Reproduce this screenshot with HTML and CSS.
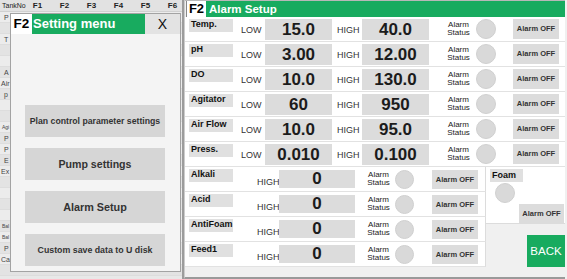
FILE: index.html
```html
<!DOCTYPE html>
<html>
<head>
<meta charset="utf-8">
<link rel="stylesheet" href="styles.css">
</head>
<body>
<div class="screen">
  <div class="left">
    <div class="thead">
      <span class="tk">TankNo</span><span>F1</span><span>F2</span><span>F3</span><span>F4</span><span>F5</span><span>F6</span>
    </div>
    <div class="trows">
      <div class="tr"><span class="c">P</span></div>
      <div class="tr alt"><span></span></div>
      <div class="tr"><span class="c">T</span></div>
      <div class="tr alt"><span></span></div>
      <div class="tr"><span></span></div>
      <div class="tr alt"><span class="c">A</span></div>
      <div class="tr"><span>Air</span></div>
      <div class="tr alt"><span class="c">p</span></div>
      <div class="tr"><span></span></div>
      <div class="tr alt"><span></span></div>
      <div class="tr"><span class="tiny">Agi</span></div>
      <div class="tr alt"><span class="c">P</span></div>
      <div class="tr"><span class="c">P</span></div>
      <div class="tr alt"><span class="c">E</span></div>
      <div class="tr"><span>Ex</span></div>
      <div class="tr alt"><span></span></div>
      <div class="tr"><span></span></div>
      <div class="tr alt"><span></span></div>
      <div class="tr"><span></span></div>
      <div class="tr alt"><span class="tiny">Bal</span></div>
      <div class="tr"><span class="tiny">Bal</span></div>
      <div class="tr alt"><span class="c">P</span></div>
      <div class="tr"><span>Ca</span></div>
      <div class="tr alt"><span></span></div>
    </div>
    <div class="dialog">
      <div class="dlg-head">
        <span class="fbox">F2</span>
        <span class="dlg-title">Setting menu</span>
        <span class="dlg-close">X</span>
      </div>
      <div class="dlg-body">
        <div class="menu-btn mb-plan">Plan control parameter settings</div>
        <div class="menu-btn mb-pump">Pump settings</div>
        <div class="menu-btn mb-alarm">Alarm Setup</div>
        <div class="menu-btn mb-save">Custom save data to U disk</div>
      </div>
    </div>
  </div>

  <div class="right">
    <div class="rhead">
      <span class="fbox2">F2</span>
      <span class="rtitle">Alarm Setup</span>
    </div>
    <div class="urows">
      <div class="row"><span class="lbl">Temp.</span><span class="lowt">LOW</span><span class="val">15.0</span><span class="hight">HIGH</span><span class="val val2">40.0</span><span class="ast">Alarm<br>Status</span><span class="dot"></span><span class="off">Alarm OFF</span></div>
      <div class="row"><span class="lbl">pH</span><span class="lowt">LOW</span><span class="val">3.00</span><span class="hight">HIGH</span><span class="val val2">12.00</span><span class="ast">Alarm<br>Status</span><span class="dot"></span><span class="off">Alarm OFF</span></div>
      <div class="row"><span class="lbl">DO</span><span class="lowt">LOW</span><span class="val">10.0</span><span class="hight">HIGH</span><span class="val val2">130.0</span><span class="ast">Alarm<br>Status</span><span class="dot"></span><span class="off">Alarm OFF</span></div>
      <div class="row"><span class="lbl">Agitator</span><span class="lowt">LOW</span><span class="val">60</span><span class="hight">HIGH</span><span class="val val2">950</span><span class="ast">Alarm<br>Status</span><span class="dot"></span><span class="off">Alarm OFF</span></div>
      <div class="row"><span class="lbl">Air Flow</span><span class="lowt">LOW</span><span class="val">10.0</span><span class="hight">HIGH</span><span class="val val2">95.0</span><span class="ast">Alarm<br>Status</span><span class="dot"></span><span class="off">Alarm OFF</span></div>
      <div class="row"><span class="lbl">Press.</span><span class="lowt">LOW</span><span class="val">0.010</span><span class="hight">HIGH</span><span class="val val2">0.100</span><span class="ast">Alarm<br>Status</span><span class="dot"></span><span class="off">Alarm OFF</span></div>
    </div>
    <div class="lower">
      <div class="lrows">
        <div class="lrow"><span class="lbl">Alkali</span><span class="lhigh">HIGH</span><span class="lval">0</span><span class="ast last">Alarm<br>Status</span><span class="dot ldot"></span><span class="off loff">Alarm OFF</span></div>
        <div class="lrow"><span class="lbl">Acid</span><span class="lhigh">HIGH</span><span class="lval">0</span><span class="ast last">Alarm<br>Status</span><span class="dot ldot"></span><span class="off loff">Alarm OFF</span></div>
        <div class="lrow"><span class="lbl">AntiFoam</span><span class="lhigh">HIGH</span><span class="lval">0</span><span class="ast last">Alarm<br>Status</span><span class="dot ldot"></span><span class="off loff">Alarm OFF</span></div>
        <div class="lrow"><span class="lbl">Feed1</span><span class="lhigh">HIGH</span><span class="lval">0</span><span class="ast last">Alarm<br>Status</span><span class="dot ldot"></span><span class="off loff">Alarm OFF</span></div>
      </div>
      <div class="side">
        <div class="foam">
          <span class="foam-lbl">Foam</span>
          <span class="dot foam-dot"></span>
          <span class="off foam-off">Alarm OFF</span>
        </div>
        <div class="backwrap"><span class="back">BACK</span></div>
      </div>
    </div>
  </div>
</div>
</body>
</html>
```

FILE: styles.css
```css
* { box-sizing: border-box; }
html, body { margin: 0; padding: 0; background: #f0f0f0; }

.screen {
  display: flex;
  width: 567px;
  height: 279px;
  overflow: hidden;
  font-family: "Liberation Sans", Arial, sans-serif;
  color: #222;
}

/* ---------- left background panel ---------- */
.left {
  position: relative;
  flex: none;
  width: 184px;
  height: 279px;
  background: #e8e8e8;
  border-right: 2px solid #9c9c9c;
  overflow: hidden;
}
.thead {
  display: grid;
  grid-template-columns: 24px repeat(6, 27px);
  height: 12px;
  align-items: center;
  background: #e2e2e2;
  border-bottom: 1px solid #d0d0d0;
}
.thead span {
  text-align: center;
  font-size: 8px;
  font-weight: bold;
  color: #222;
  line-height: 11px;
}
.thead .tk {
  font-size: 7px;
  font-weight: normal;
  text-align: left;
  padding-left: 2px;
  white-space: nowrap;
}
.trows { display: flex; flex-direction: column; }
.tr {
  height: 11px;
  background: #ececec;
  border-bottom: 1px solid #dddddd;
  display: flex;
  align-items: center;
}
.tr.alt { background: #e3e3e3; }
.tr span {
  padding-left: 1px;
  font-size: 7px;
  line-height: 9px;
  color: #444;
  white-space: nowrap;
}
.tr span.c { padding-left: 4px; }
.tr span.tiny { font-size: 5px; padding-left: 2px; }

.dialog {
  position: absolute;
  left: 10px;
  top: 13px;
  width: 171px;
  height: 259px;
  border: 1px solid #a3a3a3;
  background: #f4f4f4;
  display: flex;
  flex-direction: column;
}
.dlg-head {
  display: flex;
  height: 20px;
  flex: none;
}
.fbox {
  width: 21px;
  background: #fff;
  font-weight: bold;
  font-size: 13.5px;
  line-height: 20px;
  color: #000;
  text-align: center;
}
.dlg-title {
  width: 113px;
  background: #18ab5f;
  color: #fff;
  font-weight: bold;
  font-size: 13px;
  line-height: 20px;
  padding-left: 1px;
  white-space: nowrap;
}
.dlg-close {
  flex: 1;
  background: #e3e3e3;
  text-align: center;
  font-size: 14px;
  line-height: 20px;
  color: #111;
}
.dlg-body {
  display: flex;
  flex-direction: column;
  gap: 11px;
  padding: 71px 0 0 14px;
}
.menu-btn {
  width: 140px;
  height: 32px;
  background: #d6d6d6;
  display: flex;
  align-items: center;
  justify-content: center;
  font-weight: bold;
  color: #333;
  white-space: nowrap;
}
.mb-plan { font-size: 8.7px; }
.mb-pump { font-size: 10.6px; }
.mb-alarm { font-size: 10.8px; }
.mb-save { font-size: 8.8px; }

/* ---------- right panel ---------- */
.right {
  flex: none;
  width: 381px;
  height: 279px;
  display: flex;
  flex-direction: column;
  background: #f0f0f0;
  border-left: 1px solid #cccccc;
  border-bottom: 2px solid #9a9a9a;
}
.rhead {
  display: flex;
  height: 17px;
  flex: none;
  border-top: 1px solid #b8b8b8;
  padding-left: 1px;
}
.fbox2 {
  width: 20px;
  background: #fff;
  border-left: 1px solid #888;
  font-weight: bold;
  font-size: 13px;
  line-height: 16px;
  color: #000;
  text-align: center;
}
.rtitle {
  flex: 1;
  background: #18ab5f;
  color: #fff;
  font-weight: bold;
  font-size: 11.5px;
  line-height: 16px;
  padding-left: 3px;
}

.urows { display: flex; flex-direction: column; flex: none; }
.row {
  display: flex;
  align-items: center;
  height: 25px;
  background: #fff;
  border-bottom: 1px solid #e2e2e2;
}
.lbl {
  align-self: flex-start;
  margin: 2px 0 0 4px;
  width: 44px;
  height: 13px;
  background: #e0e0e0;
  font-weight: bold;
  font-size: 9px;
  line-height: 11px;
  padding-left: 2px;
  color: #111;
  white-space: nowrap;
  flex: none;
}
.lowt, .hight, .lhigh {
  align-self: flex-end;
  font-size: 9px;
  line-height: 9px;
  color: #333;
  flex: none;
}
.lowt { margin: 0 0 6px 8px; width: 20px; }
.hight { margin: 0 0 6px 5px; width: 22px; }
.val {
  margin-left: 4px;
  width: 67px;
  height: 21px;
  background: #dcdcdc;
  font-weight: bold;
  font-size: 17px;
  line-height: 21px;
  text-align: center;
  color: #1b1b1b;
  flex: none;
}
.val.val2 { margin-left: 3px; }
.ast {
  margin-left: 17px;
  width: 25px;
  font-size: 8px;
  line-height: 8px;
  text-align: center;
  color: #222;
  flex: none;
}
.dot {
  margin-left: 5px;
  width: 20px;
  height: 20px;
  border-radius: 50%;
  background: #d9d9d9;
  border: 1px solid #d0d0d0;
  flex: none;
}
.off {
  margin-left: 17px;
  width: 46px;
  height: 20px;
  background: #dcdcdc;
  font-weight: bold;
  font-size: 7.5px;
  line-height: 20px;
  text-align: center;
  color: #333;
  white-space: nowrap;
  flex: none;
}

.lower {
  display: flex;
  flex: 1;
}
.lrows {
  width: 301px;
  display: flex;
  flex-direction: column;
  flex: none;
}
.lrow {
  display: flex;
  align-items: center;
  height: 25px;
  background: #fff;
  border-bottom: 1px solid #e2e2e2;
  border-right: 1px solid #dcdcdc;
}
.lhigh { margin: 0 0 4px 24px; width: 22px; }
.lval {
  align-self: flex-start;
  margin-top: 3px;
  width: 76px;
  height: 18px;
  background: #dcdcdc;
  font-weight: bold;
  font-size: 17px;
  line-height: 18px;
  text-align: center;
  color: #1b1b1b;
  flex: none;
}
.ast.last { margin-left: 11px; }
.dot.ldot { margin-left: 4px; width: 19px; height: 19px; }
.off.loff { margin-left: 18px; height: 19px; line-height: 19px; }

.side {
  flex: 1;
  display: flex;
  flex-direction: column;
}
.foam {
  height: 57px;
  background: #fff;
  border-bottom: 1px solid #dcdcdc;
  display: flex;
  flex-direction: column;
  padding: 2px 0 0 4px;
}
.foam-lbl {
  width: 33px;
  height: 13px;
  background: #e0e0e0;
  font-weight: bold;
  font-size: 9px;
  line-height: 12px;
  padding-left: 2px;
  color: #111;
}
.dot.foam-dot { margin: 1px 0 0 5px; }
.off.foam-off {
  align-self: flex-end;
  margin: 1px 1px 0 0;
  width: 45px;
  height: 19px;
  line-height: 19px;
}
.backwrap {
  display: flex;
  justify-content: flex-end;
  padding-top: 11px;
}
.back {
  width: 38px;
  height: 32px;
  background: #18ab5f;
  color: #fff;
  font-size: 11.5px;
  line-height: 32px;
  text-align: center;
}
```
